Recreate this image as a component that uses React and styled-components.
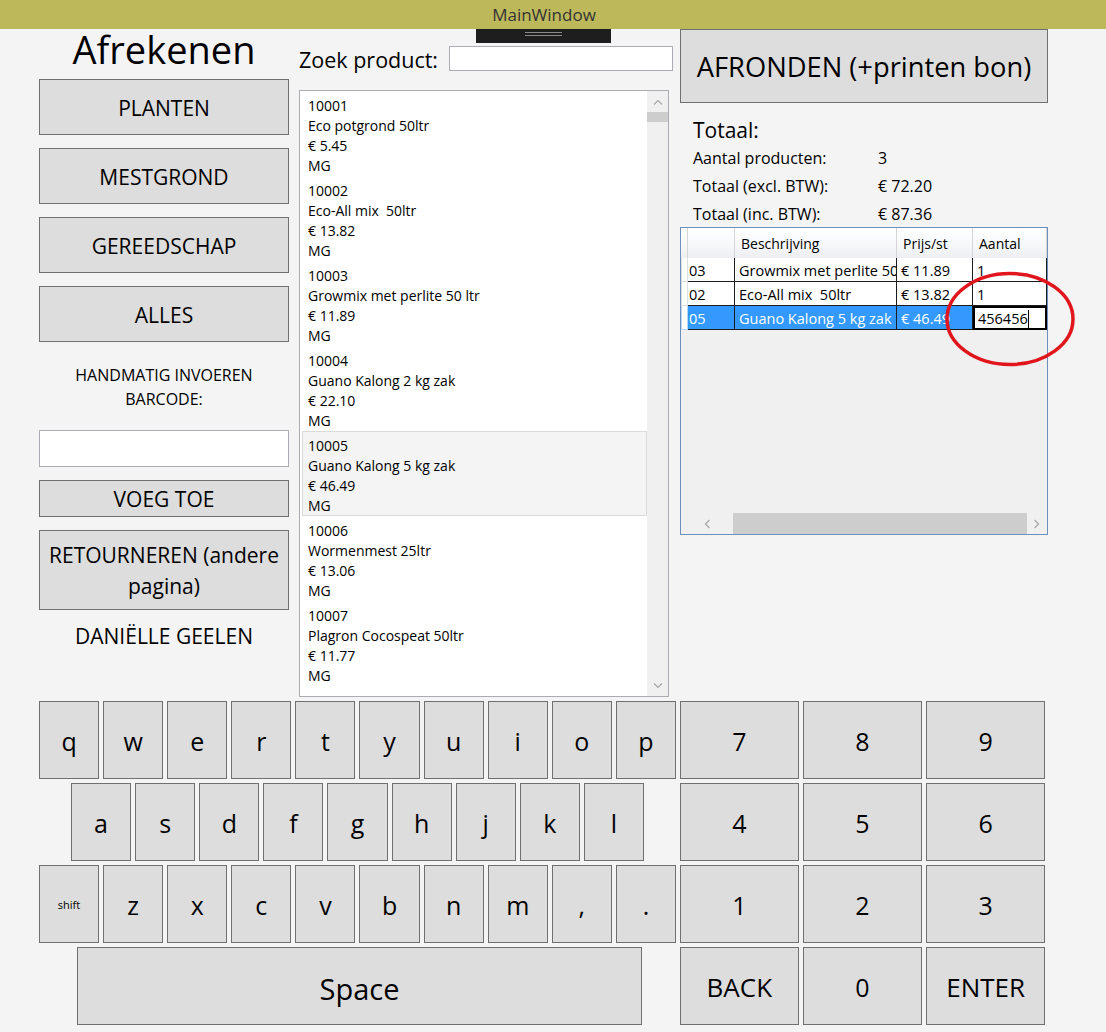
import React from "react";
import styled, { createGlobalStyle } from "styled-components";

const GlobalStyle = createGlobalStyle`
  html, body { margin: 0; padding: 0; background: #f4f4f4; }
  body { font-family: "Open Sans", "Noto Sans", sans-serif; color: #000; }
  * { box-sizing: border-box; }
`;

const products = [
  { code: "10001", name: "Eco potgrond 50ltr", price: "€ 5.45", cat: "MG" },
  { code: "10002", name: "Eco-All mix  50ltr", price: "€ 13.82", cat: "MG" },
  { code: "10003", name: "Growmix met perlite 50 ltr", price: "€ 11.89", cat: "MG" },
  { code: "10004", name: "Guano Kalong 2 kg zak", price: "€ 22.10", cat: "MG" },
  { code: "10005", name: "Guano Kalong 5 kg zak", price: "€ 46.49", cat: "MG", active: true },
  { code: "10006", name: "Wormenmest 25ltr", price: "€ 13.06", cat: "MG" },
  { code: "10007", name: "Plagron Cocospeat 50ltr", price: "€ 11.77", cat: "MG" },
  { code: "10008", name: "", price: "", cat: "" },
];

const cart = [
  { id: "03", name: "Growmix met perlite 50 ltr", price: "€ 11.89", qty: "1" },
  { id: "02", name: "Eco-All mix  50ltr", price: "€ 13.82", qty: "1" },
  { id: "05", name: "Guano Kalong 5 kg zak", price: "€ 46.49", qty: "456456", selected: true },
];

const rowOne = ["q", "w", "e", "r", "t", "y", "u", "i", "o", "p"];
const rowTwo = ["a", "s", "d", "f", "g", "h", "j", "k", "l"];
const rowThree = ["shift", "z", "x", "c", "v", "b", "n", "m", ",", "."];
const numKeys = ["7", "8", "9", "4", "5", "6", "1", "2", "3", "BACK", "0", "ENTER"];

const App = () => {
  return (
    <Root>
      <GlobalStyle />
      <TitleBar>MainWindow</TitleBar>
      <DesignerTab>
        <Grip />
      </DesignerTab>

      <Top>
        <LeftCol>
          <PageTitle>Afrekenen</PageTitle>
          <SideButton>PLANTEN</SideButton>
          <SideButton>MESTGROND</SideButton>
          <SideButton>GEREEDSCHAP</SideButton>
          <SideButton>ALLES</SideButton>
          <BarcodeLabel>
            HANDMATIG INVOEREN
            <br />
            BARCODE:
          </BarcodeLabel>
          <BarcodeInput />
          <SideButton $h={37}>VOEG TOE</SideButton>
          <SideButton $h={80}>
            RETOURNEREN (andere
            <br />
            pagina)
          </SideButton>
          <UserName>DANIËLLE GEELEN</UserName>
        </LeftCol>

        <MiddleCol>
          <SearchRow>
            <SearchLabel>Zoek product:</SearchLabel>
            <SearchInput />
          </SearchRow>
          <ProductList>
            <Items>
              {products.map((p) => (
                <Item key={p.code} $active={p.active}>
                  <div>{p.code}</div>
                  <div>{p.name}</div>
                  <div>{p.price}</div>
                  <div>{p.cat}</div>
                </Item>
              ))}
            </Items>
            <VScroll>
              <ArrowBox>
                <svg width="10" height="6" viewBox="0 0 10 6">
                  <polyline points="1,5.5 5,1.5 9,5.5" fill="none" stroke="#a6a6a6" strokeWidth="1.2" />
                </svg>
              </ArrowBox>
              <VThumb />
              <Spacer />
              <ArrowBox>
                <svg width="10" height="6" viewBox="0 0 10 6">
                  <polyline points="1,0.5 5,4.5 9,0.5" fill="none" stroke="#a6a6a6" strokeWidth="1.2" />
                </svg>
              </ArrowBox>
            </VScroll>
          </ProductList>
        </MiddleCol>

        <RightCol>
          <FinishButton>AFRONDEN (+printen bon)</FinishButton>
          <TotalTitle>Totaal:</TotalTitle>
          <Stats>
            <span>Aantal producten:</span>
            <span>3</span>
            <span>Totaal (excl. BTW):</span>
            <span>€ 72.20</span>
            <span>Totaal (inc. BTW):</span>
            <span>€ 87.36</span>
          </Stats>
          <CartGrid>
            <GridRow $header>
              <HeaderCell />
              <HeaderCell />
              <HeaderCell>Beschrijving</HeaderCell>
              <HeaderCell>Prijs/st</HeaderCell>
              <HeaderCell>Aantal</HeaderCell>
            </GridRow>
            {cart.map((r) => (
              <GridRow key={r.id}>
                <RowHeader $selected={r.selected} />
                <Cell $selected={r.selected} $pad={1}>{r.id}</Cell>
                <Cell $selected={r.selected}>{r.name}</Cell>
                <Cell $selected={r.selected}>{r.price}</Cell>
                {r.selected ? (
                  <EditCell>
                    {r.qty}
                    <Caret />
                  </EditCell>
                ) : (
                  <Cell>{r.qty}</Cell>
                )}
              </GridRow>
            ))}
            <Spacer />
            <HScroll>
              <HArrow $w={52}>
                <svg width="6" height="10" viewBox="0 0 6 10">
                  <polyline points="5.5,1 1.5,5 5.5,9" fill="none" stroke="#a6a6a6" strokeWidth="1.2" />
                </svg>
              </HArrow>
              <HThumb />
              <HArrow $w={20}>
                <svg width="6" height="10" viewBox="0 0 6 10">
                  <polyline points="0.5,1 4.5,5 0.5,9" fill="none" stroke="#a6a6a6" strokeWidth="1.2" />
                </svg>
              </HArrow>
            </HScroll>
          </CartGrid>
        </RightCol>
      </Top>

      <Keyboard>
        <Letters>
          <KeyRow $n={10}>
            {rowOne.map((k) => (
              <Key key={k}>{k}</Key>
            ))}
          </KeyRow>
          <KeyRow $n={9} $inset={32}>
            {rowTwo.map((k) => (
              <Key key={k}>{k}</Key>
            ))}
          </KeyRow>
          <KeyRow $n={10}>
            {rowThree.map((k) => (
              <Key key={k} $small={k === "shift"}>
                {k}
              </Key>
            ))}
          </KeyRow>
          <SpaceRow>
            <SpaceKey>Space</SpaceKey>
          </SpaceRow>
        </Letters>
        <NumPad>
          {numKeys.map((k) => (
            <Key key={k} $big={k.length > 1}>
              {k}
            </Key>
          ))}
        </NumPad>
      </Keyboard>

      <Annotation width="140" height="104" viewBox="0 0 140 104">
        <ellipse cx="70" cy="51" rx="63" ry="45.5" fill="none" stroke="#e1151c" strokeWidth="3.5" />
      </Annotation>
    </Root>
  );
};

const Root = styled.div`
  position: relative;
  width: 1106px;
  height: 1032px;
  background: #f4f4f4;
  overflow: hidden;
`;

const TitleBar = styled.div`
  height: 29px;
  background: #bdb95b;
  display: flex;
  align-items: center;
  justify-content: center;
  padding-right: 18px;
  font-size: 17px;
  color: #333;
`;

const DesignerTab = styled.div`
  position: absolute;
  left: 476px;
  top: 29px;
  width: 135px;
  height: 14px;
  background: #1e1e1e;
  display: flex;
  justify-content: center;
  padding-top: 3px;
`;

const Grip = styled.div`
  width: 37px;
  height: 4px;
  border-top: 1px solid #8a8a8a;
  border-bottom: 1px solid #8a8a8a;
`;

const Top = styled.div`
  display: flex;
  height: 668px;
  padding-left: 39px;
`;

const LeftCol = styled.div`
  width: 250px;
  display: flex;
  flex-direction: column;
`;

const PageTitle = styled.h1`
  margin: 0;
  height: 50px;
  font-size: 38px;
  font-weight: 400;
  line-height: 40px;
  text-align: center;
`;

const SideButton = styled.button`
  height: ${(p) => p.$h || 56}px;
  margin: 0 0 13px;
  padding: 2px 0 0;
  border: 1px solid #707070;
  background: #dddddd;
  font-family: inherit;
  font-size: 21px;
  line-height: 31px;
  color: #000;
`;

const BarcodeLabel = styled.div`
  margin-top: 8px;
  font-size: 16px;
  line-height: 24px;
  text-align: center;
`;

const BarcodeInput = styled.input`
  height: 37px;
  margin: 19px 0 13px;
  border: 1px solid #abadb3;
  background: #fff;
`;

const UserName = styled.div`
  font-size: 21px;
  line-height: 30px;
  text-align: center;
  margin-top: -2px;
`;

const MiddleCol = styled.div`
  width: 370px;
  margin-left: 10px;
  display: flex;
  flex-direction: column;
`;

const SearchRow = styled.div`
  display: flex;
  align-items: center;
  gap: 10px;
  width: 374px;
  height: 25px;
  margin-top: 17px;
`;

const SearchLabel = styled.span`
  width: 140px;
  font-size: 21.5px;
  padding-top: 2px;
  white-space: nowrap;
`;

const SearchInput = styled.input`
  flex: 1;
  height: 25px;
  border: 1px solid #abadb3;
  background: #fff;
`;

const ProductList = styled.div`
  margin-top: 19px;
  height: 607px;
  border: 1px solid #abadb3;
  background: #fff;
  display: flex;
  overflow: hidden;
`;

const Items = styled.div`
  flex: 1;
  padding-left: 2px;
  overflow: hidden;
`;

const Item = styled.div`
  height: 85px;
  padding: 4px 5px 0;
  border: 1px solid ${(p) => (p.$active ? "#dadada" : "transparent")};
  background: ${(p) => (p.$active ? "#f4f4f4" : "transparent")};
  font-size: 14px;
  line-height: 20px;
  white-space: pre;
`;

const VScroll = styled.div`
  width: 21px;
  background: #f0f0f0;
  display: flex;
  flex-direction: column;
`;

const ArrowBox = styled.div`
  height: 21px;
  display: flex;
  align-items: center;
  justify-content: center;
`;

const VThumb = styled.div`
  height: 10px;
  background: #cdcdcd;
`;

const Spacer = styled.div`
  flex: 1;
`;

const RightCol = styled.div`
  width: 368px;
  margin-left: 11px;
  display: flex;
  flex-direction: column;
`;

const FinishButton = styled.button`
  height: 74px;
  padding: 0;
  border: 1px solid #707070;
  background: #dddddd;
  font-family: inherit;
  font-size: 27.3px;
  color: #000;
`;

const TotalTitle = styled.div`
  margin-top: 14px;
  padding-left: 13px;
  font-size: 21px;
  line-height: 27px;
`;

const Stats = styled.div`
  display: grid;
  grid-template-columns: 185px 1fr;
  padding-left: 13px;
  font-size: 16px;
  line-height: 28px;
  margin-bottom: -1px;
`;

const CartGrid = styled.div`
  height: 308px;
  border: 1px solid #6c8fbd;
  background: #f0f0f0;
  display: flex;
  flex-direction: column;
`;

const GridRow = styled.div`
  display: grid;
  grid-template-columns: 7px 47px 162px 76px 74px;
  height: ${(p) => (p.$header ? 30 : 24)}px;
`;

const HeaderCell = styled.div`
  display: flex;
  align-items: center;
  padding: 0 0 0 6px;
  background: linear-gradient(#ffffff, #f6f7f9 60%, #eceef1);
  border-right: 1px solid #d5d5d5;
  font-size: 14px;
  white-space: nowrap;
  overflow: hidden;
`;

const RowHeader = styled.div`
  background: #fff;
  border: 1px solid ${(p) => (p.$selected ? "#b9d7f5" : "#dedede")};
  border-top: none;
`;

const Cell = styled.div`
  display: flex;
  align-items: center;
  padding-left: ${(p) => (p.$pad != null ? p.$pad : 4)}px;
  padding-top: 1px;
  background: ${(p) => (p.$selected ? "#3399ff" : "#fff")};
  color: ${(p) => (p.$selected ? "#fff" : "#000")};
  border-right: 1px solid #1c1c1c;
  border-bottom: 1px solid #1c1c1c;
  font-size: 14.5px;
  white-space: pre;
  overflow: hidden;
`;

const EditCell = styled.div`
  display: flex;
  align-items: center;
  padding: 1px 0 0 3px;
  background: #fff;
  border: 2px solid #000;
  font-size: 14.5px;
  white-space: pre;
  overflow: hidden;
`;

const Caret = styled.span`
  width: 1px;
  height: 18px;
  background: #000;
`;

const HScroll = styled.div`
  height: 21px;
  display: flex;
`;

const HArrow = styled.div`
  width: ${(p) => p.$w}px;
  display: flex;
  align-items: center;
  justify-content: center;
`;

const HThumb = styled.div`
  flex: 1;
  background: #cdcdcd;
`;

const Keyboard = styled.div`
  display: flex;
  gap: 4px;
  margin-top: 4px;
  padding-left: 39px;
`;

const Letters = styled.div`
  width: 637px;
  display: flex;
  flex-direction: column;
  gap: 4px;
`;

const KeyRow = styled.div`
  display: grid;
  grid-template-columns: repeat(${(p) => p.$n}, 1fr);
  gap: 4px;
  height: 78px;
  padding: 0 ${(p) => p.$inset || 0}px;
`;

const Key = styled.button`
  display: flex;
  align-items: center;
  justify-content: center;
  padding: 1px 0 0;
  border: 1px solid #707070;
  background: #dddddd;
  font-family: inherit;
  font-size: ${(p) => (p.$small ? 11 : p.$big ? 26 : 25)}px;
  color: #000;
`;

const SpaceRow = styled.div`
  height: 78px;
  padding-left: 38px;
  display: flex;
`;

const SpaceKey = styled(Key)`
  width: 565px;
  font-size: 29px;
  padding-top: 4px;
`;

const NumPad = styled.div`
  width: 365px;
  display: grid;
  grid-template-columns: repeat(3, 1fr);
  grid-auto-rows: 78px;
  gap: 4px 4.5px;
`;

const Annotation = styled.svg`
  position: absolute;
  left: 940px;
  top: 268px;
`;

export default App;
